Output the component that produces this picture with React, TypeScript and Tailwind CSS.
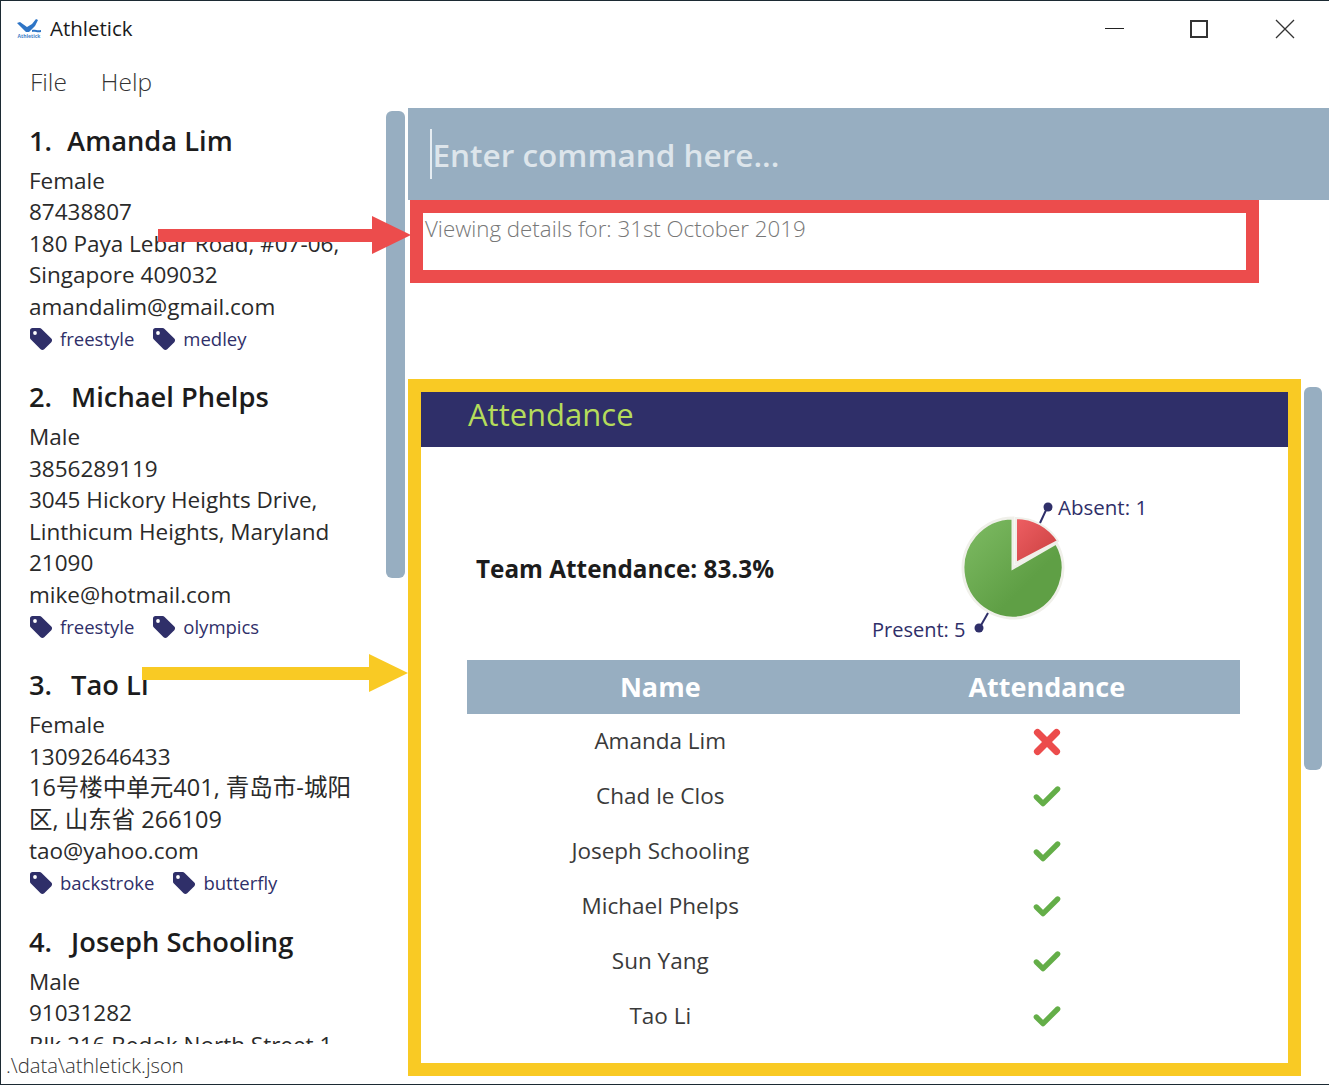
import { Check, X } from "lucide-react";

const FONT = "font-['Open_Sans','Noto_Sans_CJK_SC',sans-serif]";

type Person = { index: string; name: string; lines: string[]; tags: string[] };

const PEOPLE: Person[] = [
  {
    index: "1.",
    name: "Amanda Lim",
    lines: ["Female", "87438807", "180 Paya Lebar Road, #07-06,", "Singapore 409032", "amandalim@gmail.com"],
    tags: ["freestyle", "medley"],
  },
  {
    index: "2.",
    name: "Michael Phelps",
    lines: ["Male", "3856289119", "3045 Hickory Heights Drive,", "Linthicum Heights, Maryland", "21090", "mike@hotmail.com"],
    tags: ["freestyle", "olympics"],
  },
  {
    index: "3.",
    name: "Tao Li",
    lines: ["Female", "13092646433", "16号楼中单元401, 青岛市-城阳", "区, 山东省 266109", "tao@yahoo.com"],
    tags: ["backstroke", "butterfly"],
  },
  {
    index: "4.",
    name: "Joseph Schooling",
    lines: ["Male", "91031282", "Blk 216 Bedok North Street 1"],
    tags: [],
  },
];

const ATTENDANCE = [
  { name: "Amanda Lim", present: false },
  { name: "Chad le Clos", present: true },
  { name: "Joseph Schooling", present: true },
  { name: "Michael Phelps", present: true },
  { name: "Sun Yang", present: true },
  { name: "Tao Li", present: true },
];

function TagIcon() {
  return (
    <svg width="24" height="24" viewBox="0 0 24 24" className="shrink-0">
      <path
        d="M1 3.500C1 2 2 1 3.500 1h7c.9 0 1.500.3 2.100.9l9.700 9.700c1 1 1 2.600 0 3.600l-7.100 7.100c-1 1-2.600 1-3.600 0L1.900 12.600C1.300 12 1 11.400 1 10.500z"
        fill="#2f2f69"
      />
      <circle cx="6" cy="6" r="1.900" fill="#fff" />
    </svg>
  );
}

function Logo() {
  return (
    <svg width="26" height="19" viewBox="0 0 26 19" className="shrink-0">
      <path d="M1 4l3-1 7 5 5-3 4-5 2 1-3 6-6 6-3 0z" fill="#2e75c6" />
      <path d="M16 11c3-1 5 1 9 0v2c-4 1-6-1-9 0z" fill="#2e75c6" />
      <text x="13" y="18.500" textAnchor="middle" fontSize="5" fontWeight="700" fill="#3f7fc8" fontFamily="Open Sans">
        Athletick
      </text>
    </svg>
  );
}

function PersonCard({ person }: { person: Person }) {
  return (
    <div className="pl-[28px] pt-[12px] pb-[9.500px]">
      <div className="flex h-[44.500px] items-center pb-[2px] text-[27.300px] font-semibold text-[#1c1c1c]">
        <span className={person.index === "1." ? "mr-[15px]" : "mr-[19px]"}>{person.index}</span>
        <span>{person.name}</span>
      </div>
      <div className="text-[22.500px] leading-[31.500px] text-[#2a2a2a] whitespace-nowrap">
        {person.lines.map((line) => (
          <div key={line} className={/[\u4e00-\u9fff]/.test(line) ? "text-[23.500px]" : ""}>
            {line}
          </div>
        ))}
      </div>
      {person.tags.length > 0 && (
        <div className="flex h-[33px] items-center gap-[18px] text-[18.500px] text-[#2f2f69]">
          {person.tags.map((tag) => (
            <div key={tag} className="flex items-center gap-[7px]">
              <TagIcon />
              <span>{tag}</span>
            </div>
          ))}
        </div>
      )}
    </div>
  );
}

function PieChart() {
  return (
    <svg width="300" height="160" viewBox="0 0 300 160" className="block overflow-visible">
      <defs>
        <linearGradient id="greenSlice" x1="0" y1="0" x2="1" y2="1">
          <stop offset="0%" stopColor="#7fbc64" />
          <stop offset="65%" stopColor="#5f9f45" />
        </linearGradient>
        <linearGradient id="redSlice" x1="0" y1="0" x2="1" y2="1">
          <stop offset="0%" stopColor="#ee5f63" />
          <stop offset="100%" stopColor="#c93f3f" />
        </linearGradient>
      </defs>
      <path d="M112 88 L155.300 63 A50 50 0 1 1 112 38 Z" fill="url(#greenSlice)" stroke="#f0f0ea" strokeWidth="3" />
      <path d="M115 83 L115 38 A50 50 0 0 1 157 61 Z" fill="url(#redSlice)" stroke="#f0f0ea" strokeWidth="2" />
      <line x1="139" y1="43" x2="146" y2="28" stroke="#2f2f69" strokeWidth="2" />
      <circle cx="147" cy="27" r="4.500" fill="#2f2f69" />
      <line x1="87" y1="133" x2="79" y2="147" stroke="#2f2f69" strokeWidth="2" />
      <circle cx="78" cy="148" r="4.500" fill="#2f2f69" />
      <text x="157" y="35" fontSize="20.500" fill="#2f2f69" fontFamily="Open Sans">
        Absent: 1
      </text>
      <text x="-29" y="157" fontSize="20" fill="#2f2f69" fontFamily="Open Sans">
        Present: 5
      </text>
    </svg>
  );
}

export default function App() {
  return (
    <div className={`${FONT} relative flex h-[1085px] w-[1329px] flex-col overflow-hidden border-t border-l border-[#1c2a33] bg-white`}>
      {/* Title bar */}
      <div className="flex h-[55px] shrink-0 items-center pl-[15px]">
        <Logo />
        <span className="ml-[8px] text-[20.500px] text-[#1a1a1a]">Athletick</span>
        <div className="ml-auto flex items-center pr-[34px]">
          <div className="h-[1.500px] w-[19px] bg-[#222]" />
          <div className="ml-[66px] h-[18px] w-[18px] border-2 border-[#333]" />
          <svg width="20" height="20" viewBox="0 0 20 20" className="ml-[67px]">
            <path d="M1 1l18 18M19 1L1 19" stroke="#333" strokeWidth="1.300" />
          </svg>
        </div>
      </div>

      {/* Menu */}
      <div className="flex h-[52px] shrink-0 items-center gap-[34px] pl-[29px] text-[24.500px] font-light text-[#333]">
        <span>File</span>
        <span>Help</span>
      </div>

      <div className="flex min-h-0 flex-1">
        {/* Person list */}
        <div className="flex w-[407px] shrink-0 flex-col">
          <div className="relative h-[937px] overflow-hidden">
            {PEOPLE.map((person) => (
              <PersonCard key={person.index} person={person} />
            ))}
            <div className="absolute left-[385px] top-[3px] h-[467px] w-[19px] rounded-[6px] bg-[#97aec1]" />
          </div>
          <div className="flex h-[41px] items-center pl-[5px] pt-[2px] text-[20.300px] font-light text-[#333]">.\data\athletick.json</div>
        </div>

        {/* Command box, result and attendance */}
        <div className="relative min-w-0 flex-1">
          <div className="flex h-[92px] items-center bg-[#97aec1] pl-[22px]">
            <div className="h-[50px] w-[1.500px] bg-[#e6edf2]" />
            <span className="ml-[1px] pt-[2px] text-[31.500px] font-semibold text-[#dde5eb]">Enter command here...</span>
          </div>

          <div className="ml-[2px] h-[83px] w-[849px] border-[13px] border-[#ec4c4c]">
            <div className="pl-[2px] pt-[1px] text-[22.300px] font-light leading-[30px] text-[#777]">Viewing details for: 31st October 2019</div>
          </div>

          <div className="mt-[96px] h-[697px] w-[893px] border-[13px] border-[#f9ca24]">
            <div className="flex h-[55px] items-center bg-[#2f2f69] pb-[10px] pl-[47px] text-[31px] text-[#b5dc5b]">Attendance</div>
            <div className="pl-[46px] pr-[48px]">
              <div className="flex h-[213px] items-center">
                <div className="w-[426px] pl-[9px] pt-[32px] text-[24.300px] font-bold text-[#1c1c1c] whitespace-nowrap">Team Attendance: 83.3%</div>
                <div className="ml-[8px] pt-[12px]">
                  <PieChart />
                </div>
              </div>
              <div className="grid h-[54px] grid-cols-2 items-center bg-[#97aec1] text-center text-[27px] font-bold text-white">
                <span>Name</span>
                <span>Attendance</span>
              </div>
              {ATTENDANCE.map((row) => (
                <div key={row.name} className="grid h-[55px] grid-cols-2 items-center text-center text-[22.500px] text-[#3a3a3a]">
                  <span className="pb-[2px]">{row.name}</span>
                  <span className="flex justify-center">
                    {row.present ? (
                      <Check size={32} strokeWidth={4} className="text-[#64ae48]" />
                    ) : (
                      <X size={38} strokeWidth={4.500} className="text-[#ec4c4c]" />
                    )}
                  </span>
                </div>
              ))}
            </div>
          </div>

          <div className="absolute left-[896px] top-[279px] h-[383px] w-[18px] rounded-[6px] bg-[#97aec1]" />
        </div>
      </div>

      {/* Callout arrows over the page */}
      <div className="absolute left-[157px] top-[228px] h-[13px] w-[215px] bg-[#ec4c4c]" />
      <div className="absolute left-[371px] top-[215px] h-0 w-0 border-y-[19.500px] border-l-[39px] border-y-transparent border-l-[#ec4c4c]" />
      <div className="absolute left-[141px] top-[666px] h-[13px] w-[230px] bg-[#f9ca24]" />
      <div className="absolute left-[368px] top-[653px] h-0 w-0 border-y-[19.500px] border-l-[39px] border-y-transparent border-l-[#f9ca24]" />

      <div className="absolute inset-x-0 bottom-0 h-px bg-[#1c2a33]" />
    </div>
  );
}
